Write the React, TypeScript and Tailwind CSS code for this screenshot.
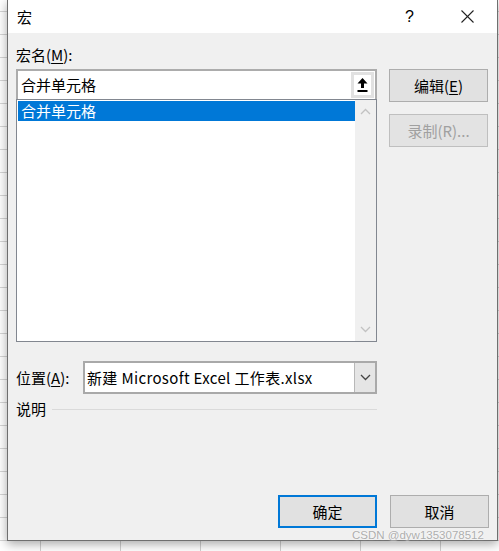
import React from 'react'

const font = "font-['Microsoft_YaHei_UI','Noto_Sans_CJK_SC',sans-serif]"

const ChevronUp = ({ className }: { className?: string }) => (
  <svg width="11" height="7" viewBox="0 0 11 7" className={className} fill="none" stroke="currentColor" strokeWidth="1.3">
    <polyline points="1,6 5.5,1.5 10,6" />
  </svg>
)

const ChevronDown = ({ className }: { className?: string }) => (
  <svg width="11" height="7" viewBox="0 0 11 7" className={className} fill="none" stroke="currentColor" strokeWidth="1.3">
    <polyline points="1,1 5.5,5.5 10,1" />
  </svg>
)

const Key = ({ k }: { k: string }) => <span className="underline underline-offset-2 decoration-1">{k}</span>

const Btn = ({ children, disabled, primary }: { children: React.ReactNode; disabled?: boolean; primary?: boolean }) => (
  <button
    className={
      'h-[33px] flex items-center justify-center bg-[#e1e1e1] text-[15px] leading-[20px] ' +
      (primary ? 'w-[99px] border-2 border-[#0078d7] ' : 'w-[99px] border border-[#adadad] ') +
      (disabled ? 'text-[#a0a0a0] border-[#bfbfbf] bg-[#e3e3e3]' : 'text-black')
    }
  >
    {children}
  </button>
)

export default function App() {
  return (
    <div className={`w-[499px] h-[551px] relative overflow-hidden bg-white ${font} bg-[repeating-linear-gradient(to_bottom,transparent_0px,transparent_11px,#d6d6d6_11px,#d6d6d6_12px,transparent_12px,transparent_23px)]`}>
      <div className="absolute left-0 right-0 top-[541px] h-[10px] bg-white bg-[repeating-linear-gradient(to_right,transparent_0px,transparent_40px,#d0d0d0_40px,#d0d0d0_41px,transparent_41px,transparent_80px)]" />

      <div className="ml-[7px] w-[491px] h-[541px] border-x border-b border-[#6f6f6f] flex flex-col bg-[#f0f0f0] shadow-[0_3px_10px_rgba(0,0,0,0.35)] relative">
        {/* title bar */}
        <div className="h-[33px] bg-white flex items-center pl-[9px] text-[15px] leading-[20px] text-black">
          <span>宏</span>
          <span className="ml-auto mr-[47px] text-[16px] font-['Liberation_Sans',sans-serif]">?</span>
          <svg width="13" height="13" viewBox="0 0 13 13" className="mr-[23px]" stroke="#222" strokeWidth="1.1">
            <line x1="0.5" y1="0.5" x2="12.5" y2="12.5" />
            <line x1="12.5" y1="0.5" x2="0.5" y2="12.5" />
          </svg>
        </div>

        {/* body */}
        <div className="flex-1 flex flex-col px-[8px] text-[15px] leading-[20px] text-black">
          <div className="mt-[12px] h-[20px]">
            宏名(<Key k="M" />):
          </div>

          <div className="mt-[4px] flex">
            <div className="w-[361px] flex flex-col">
              <div className="h-[30px] border-2 border-b-0 border-[#acacac] bg-white flex items-center pl-[3px]">
                <span className="flex-1">合并单元格</span>
                <div className="w-[23px] h-[26px] bg-[#e1e1e1] flex items-center justify-center mr-[1px]">
                  <div className="w-[17px] h-[20px] bg-white flex items-center justify-center">
                    <svg width="11" height="16" viewBox="0 0 11 16">
                      <polygon points="5.5,1 10.5,6.5 7,6.5 7,11 4,11 4,6.5 0.5,6.5" fill="#000" />
                      <rect x="0.5" y="13" width="10" height="2" fill="#000" />
                    </svg>
                  </div>
                </div>
              </div>
              <div className="h-[243px] border border-[#828790] bg-white flex p-[1px]">
                <div className="flex-1">
                  <div className="h-[20px] bg-[#0078d7] text-white pl-[3px] flex items-center">合并单元格</div>
                </div>
                <div className="w-[21px] bg-[#f0f0f0] -my-[1px] -mr-[1px] flex flex-col items-center justify-between py-[8px] text-[#c2c2c2]">
                  <ChevronUp />
                  <ChevronDown />
                </div>
              </div>
            </div>

            <div className="ml-[12px] flex flex-col gap-[12px]">
              <Btn>
                编辑(<Key k="E" />)
              </Btn>
              <Btn disabled>录制(R)...</Btn>
            </div>
          </div>

          <div className="mt-[19px] flex items-center">
            <div className="w-[67px]">
              位置(<Key k="A" />):
            </div>
            <div className="w-[294px] h-[33px] border-2 border-[#a9a9a9] bg-white flex items-center">
              <span className="flex-1 pl-[2px] tracking-[0.35px]">新建 Microsoft Excel 工作表.xlsx</span>
              <div className="w-[21px] h-full bg-[#e5e5e5] border-l border-[#b8b8b8] flex items-center justify-center text-[#444]">
                <ChevronDown />
              </div>
            </div>
          </div>

          <div className="mt-[5px] h-[20px] flex items-center">
            <span>说明</span>
            <div className="ml-[6px] w-[325px] h-px bg-[#dadada]" />
          </div>

          <div className="mt-auto mb-[12px] flex justify-end gap-[13px]">
            <Btn primary>确定</Btn>
            <Btn>取消</Btn>
          </div>
        </div>
      </div>

      <div className="absolute left-[352px] top-[527px] whitespace-nowrap text-[11.5px] leading-[16px] text-[#9a9a9a]/80 font-['Liberation_Sans',sans-serif] [text-shadow:0_0_2px_#fff]">
        CSDN @dyw1353078512
      </div>
    </div>
  )
}
